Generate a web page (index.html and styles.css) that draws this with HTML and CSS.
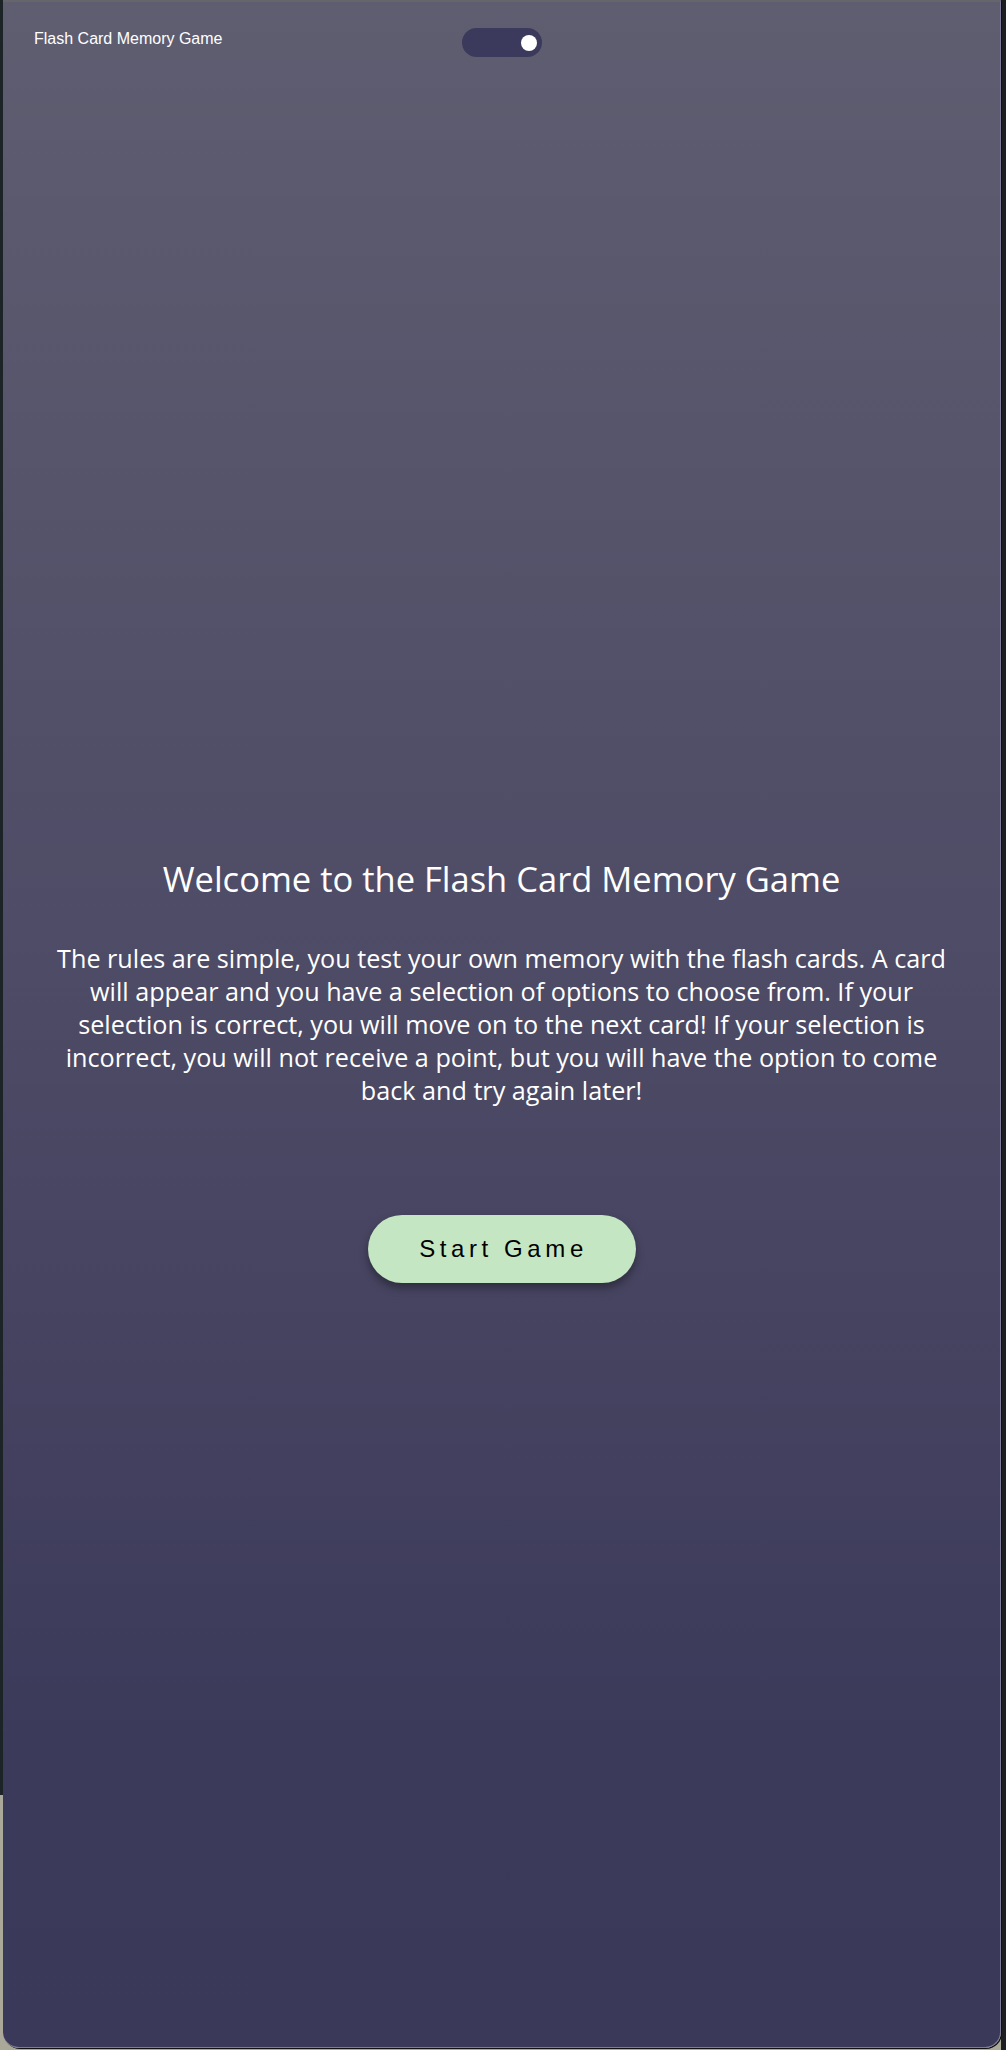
FILE: index.html
```html
<!DOCTYPE html>
<html lang="en">
<head>
<meta charset="utf-8">
<title>Flash Card Memory Game</title>
<link rel="stylesheet" href="styles.css">
</head>
<body>
<div class="frame">
  <div class="card">
    <header class="topbar">
      <div class="brand">Flash Card Memory Game</div>
      <div class="toggle" role="switch" aria-checked="true"><span class="knob"></span></div>
      <div class="spacer"></div>
    </header>
    <main class="intro">
      <h1 class="title">Welcome to the Flash Card Memory Game</h1>
      <p class="rules">The rules are simple, you test your own memory with the flash cards. A card<br>will appear and you have a selection of options to choose from. If your<br>selection is correct, you will move on to the next card! If your selection is<br>incorrect, you will not receive a point, but you will have the option to come<br>back and try again later!</p>
      <button class="start">Start Game</button>
    </main>
  </div>
</div>
</body>
</html>
```

FILE: styles.css
```css
* { box-sizing: border-box; }
html, body { margin: 0; padding: 0; }
body {
  width: 1006px;
  height: 2050px;
  overflow: hidden;
  background: linear-gradient(to bottom, #1d2428 0, #1d2428 1795px, #a9a899 1795px, #a9a899 100%);
}
.frame {
  padding: 0 5px 2px 3px;
  height: 2050px;
  background: linear-gradient(to right, transparent 0, transparent 1001px, #1b1f22 1001px);
}
.card {
  height: 2048px;
  border-top: 2px solid #666569;
  border-right: 1px solid #7d7b98;
  border-bottom: 1px solid #7d7b98;
  border-radius: 0 0 16px 16px;
  background: linear-gradient(to bottom, #5f5d70 0%, #4e4c66 45%, #3c3a5a 85%, #3b3959 100%);
  box-shadow: 1px 1px 0 #111;
  color: #fff;
}
.topbar {
  display: grid;
  grid-template-columns: 1fr auto 1fr;
  align-items: start;
  padding: 26px 31px 0 31px;
}
.brand {
  font-family: "Liberation Sans", Arial, sans-serif;
  font-size: 16px;
  line-height: 20px;
  padding-top: 1px;
  color: #fff;
}
.toggle {
  width: 80px;
  height: 29px;
  border-radius: 15px;
  background: #3c3a5c;
  display: flex;
  align-items: center;
  justify-content: flex-end;
  padding-right: 5px;
}
.knob {
  width: 16px;
  height: 16px;
  border-radius: 50%;
  background: #fff;
}
.intro {
  display: flex;
  flex-direction: column;
  align-items: center;
  padding-top: 801px;
  font-family: "Open Sans", sans-serif;
}
.title {
  margin: 0;
  font-weight: 400;
  font-size: 34.5px;
  line-height: 42px;
}
.rules {
  margin: 42px 0 0 0;
  width: 980px;
  text-align: center;
  font-size: 25.2px;
  line-height: 33px;
}
.start {
  margin-top: 108px;
  width: 268px;
  height: 68px;
  border: none;
  border-radius: 34px;
  background: #c5e6c3;
  color: #000;
  font-family: "Liberation Sans", Arial, sans-serif;
  font-size: 24px;
  letter-spacing: 4.6px;
  padding: 0 0 0 4px;
  box-shadow: 0 5px 8px rgba(0, 0, 0, 0.35);
}
```
